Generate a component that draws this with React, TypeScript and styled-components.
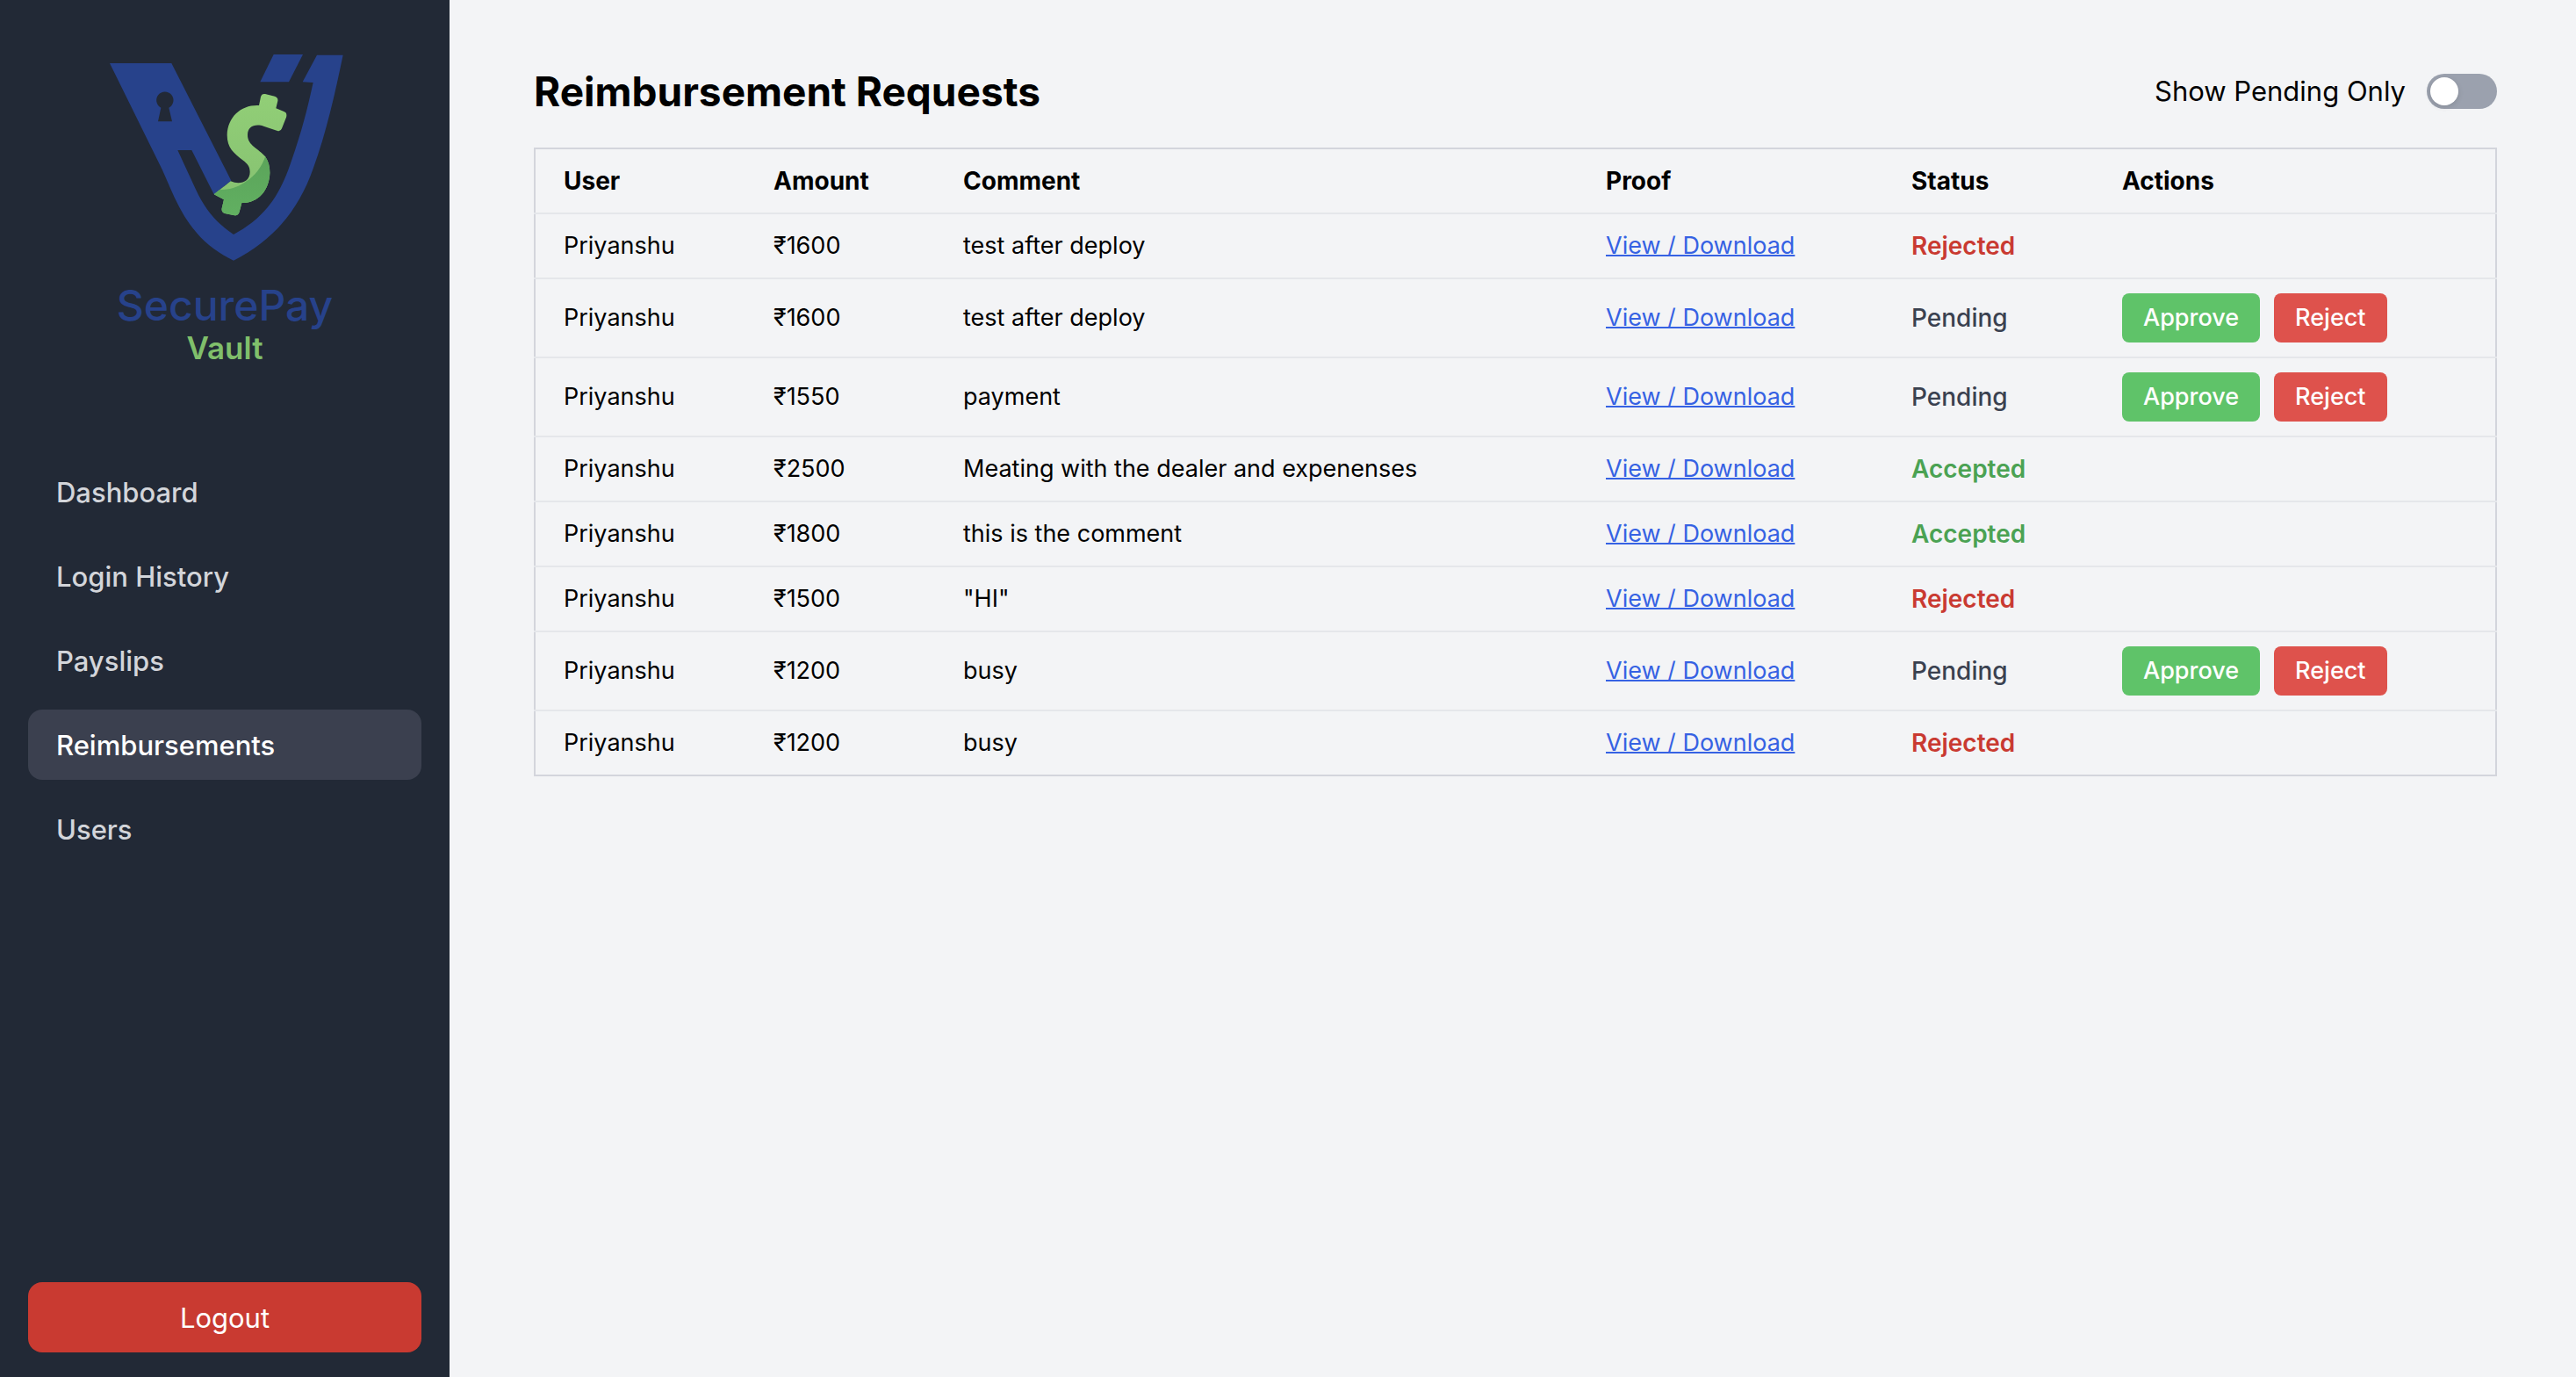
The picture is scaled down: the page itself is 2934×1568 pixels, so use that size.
import React, { useState } from "react";
import styled, { createGlobalStyle } from "styled-components";

const colors = {
  sidebar: "#222936",
  navActive: "#3b404f",
  navText: "#d3d5da",
  page: "#f3f4f6",
  border: "#d3d5dc",
  line: "#e5e7ea",
  link: "#3662e3",
  approve: "#5fc369",
  reject: "#de524c",
  danger: "#c93a31",
  success: "#4ba253",
  muted: "#3a4150",
  brandBlue: "#27428b",
  brandGreen: "#80bf6b",
};

const GlobalStyle = createGlobalStyle`
  *, *::before, *::after { box-sizing: border-box; }
  body {
    margin: 0;
    background: ${colors.page};
    color: #000;
    font-family: Inter, "Liberation Sans", sans-serif;
    font-size: 31px;
    line-height: 48px;
  }
`;

const Layout = styled.div`
  display: flex;
  min-height: 100vh;
`;

const Sidebar = styled.aside`
  flex: 0 0 512px;
  display: flex;
  flex-direction: column;
  padding: 40px 32px 28px;
  background: ${colors.sidebar};
`;

const Brand = styled.div`
  display: flex;
  flex-direction: column;
  align-items: center;
  margin-bottom: 104px;
`;

const BrandMark = styled.svg`
  width: 310px;
  height: 260px;
`;

const BrandName = styled.span`
  margin: 24px 0 4px;
  font-size: 48px;
  font-weight: 500;
  line-height: 48px;
  color: ${colors.brandBlue};
`;

const BrandSub = styled.span`
  font-size: 35px;
  font-weight: 600;
  line-height: 40px;
  color: ${colors.brandGreen};
`;

const Nav = styled.nav`
  display: flex;
  flex-direction: column;
  gap: 16px;
`;

const NavLink = styled.a<{ $active?: boolean }>`
  padding: 17px 32px 15px;
  border-radius: 16px;
  font-weight: 500;
  text-decoration: none;
  color: ${(p) => (p.$active ? "#fff" : colors.navText)};
  background: ${(p) => (p.$active ? colors.navActive : "transparent")};
`;

const LogoutButton = styled.button`
  margin-top: auto;
  padding: 17px 32px 15px;
  border: 0;
  border-radius: 16px;
  background: ${colors.danger};
  color: #fff;
  font: inherit;
  cursor: pointer;
`;

const Main = styled.main`
  flex: 1;
  min-width: 0;
  padding: 72px 90px 72px 96px;
`;

const Header = styled.header`
  display: flex;
  align-items: center;
  justify-content: space-between;
  margin-bottom: 32px;
`;

const Title = styled.h1`
  margin: 0;
  font-size: 46px;
  font-weight: 700;
  line-height: 64px;
`;

const ToggleLabel = styled.label`
  display: flex;
  align-items: center;
  gap: 24px;
  cursor: pointer;
`;

const Toggle = styled.input`
  appearance: none;
  display: flex;
  width: 80px;
  height: 40px;
  margin: 0;
  padding: 4px;
  border-radius: 20px;
  background: #9ba1ae;
  cursor: pointer;

  &::before {
    content: "";
    width: 32px;
    height: 32px;
    border-radius: 50%;
    background: #fff;
    box-shadow: 0 2px 6px rgba(0, 0, 0, 0.12);
  }

  &:checked {
    justify-content: flex-end;
    background: ${colors.approve};
  }
`;

const Table = styled.table`
  width: 100%;
  table-layout: fixed;
  border-collapse: collapse;
  border: 2px solid ${colors.border};
  font-size: 27px;
  line-height: 40px;
`;

const Col = styled.col<{ $width?: number }>`
  width: ${(p) => (p.$width ? `${p.$width}px` : "auto")};
`;

const Row = styled.tr`
  border-bottom: 2px solid ${colors.line};

  tbody > &:last-child {
    border-bottom-color: ${colors.border};
  }
`;

const HeadCell = styled.th`
  padding: 16px 32px;
  font-size: 28px;
  font-weight: 700;
  text-align: left;
`;

const Cell = styled.td`
  padding: 16px 32px;
`;

const ProofLink = styled.a`
  color: ${colors.link};
  text-decoration: underline;
  text-decoration-thickness: 2px;
`;

type StatusValue = "Rejected" | "Pending" | "Accepted";

const statusColor: Record<StatusValue, string> = {
  Rejected: colors.danger,
  Pending: colors.muted,
  Accepted: colors.success,
};

const StatusCell = styled(Cell)<{ $value: StatusValue }>`
  color: ${(p) => statusColor[p.$value]};
  font-size: 28px;
  font-weight: ${(p) => (p.$value === "Pending" ? 500 : 600)};
`;

const Actions = styled.div`
  display: flex;
  gap: 16px;
`;

const ActionButton = styled.button<{ $kind: "approve" | "reject" }>`
  padding: 8px 24px;
  border: 0;
  border-radius: 8px;
  background: ${(p) => colors[p.$kind]};
  color: #fff;
  font: inherit;
  font-weight: 500;
  cursor: pointer;
`;

interface Request {
  id: number;
  user: string;
  amount: number;
  comment: string;
  status: StatusValue;
}

const initialRequests: Request[] = [
  { id: 1, user: "Priyanshu", amount: 1600, comment: "test after deploy", status: "Rejected" },
  { id: 2, user: "Priyanshu", amount: 1600, comment: "test after deploy", status: "Pending" },
  { id: 3, user: "Priyanshu", amount: 1550, comment: "payment", status: "Pending" },
  { id: 4, user: "Priyanshu", amount: 2500, comment: "Meating with the dealer and expenenses", status: "Accepted" },
  { id: 5, user: "Priyanshu", amount: 1800, comment: "this is the comment", status: "Accepted" },
  { id: 6, user: "Priyanshu", amount: 1500, comment: '"HI"', status: "Rejected" },
  { id: 7, user: "Priyanshu", amount: 1200, comment: "busy", status: "Pending" },
  { id: 8, user: "Priyanshu", amount: 1200, comment: "busy", status: "Rejected" },
];

const navItems = ["Dashboard", "Login History", "Payslips", "Reimbursements", "Users"];
const columns = ["User", "Amount", "Comment", "Proof", "Status", "Actions"];
const columnWidths = [240, 216, undefined, 348, 240, 458];

function Logo() {
  return (
    <BrandMark viewBox="0 0 930 780" aria-hidden="true">
      <defs>
        <linearGradient id="dollarLight" x1="0" y1="0" x2="0" y2="1">
          <stop offset="0" stopColor="#92cf77" />
          <stop offset="1" stopColor="#84bf70" />
        </linearGradient>
        <linearGradient id="dollarDark" x1="0" y1="0" x2="0" y2="1">
          <stop offset="0" stopColor="#5ba45a" />
          <stop offset="1" stopColor="#62b162" />
        </linearGradient>
        <clipPath id="dollarShape">
          <path d="M582 240 L588 211 Q591 199 603 201 L636 209 Q648 213 646 225 L640 250 L669 262 Q679 267 676 278 L660 319 Q656 330 645 327 L600 312 C570 301 543 311 543 341 C543 377 580 387 603 414 C614 430 619 448 619 470 C617 532 578 574 523 573 L515 604 Q511 618 498 616 L465 609 Q453 605 455 592 L462 562 L428 544 L485 499 C515 512 551 503 551 467 C551 447 542 439 528 428 C496 403 473 385 473 341 C475 278 522 237 582 240 Z" />
        </clipPath>
      </defs>
      <path
        fill={colors.brandBlue}
        fillRule="evenodd"
        d="M72 96 L283 96 L487 497 L428 544 L352 393 L304 393 L365 525 C400 601 437 641 495 681 C611 618 656 540 694 426 C726 335 748 251 767 162 L731 160 L780 68 L869 68 C842 198 812 333 767 456 C719 592 637 698 495 770 C407 728 353 669 310 588 C286 544 271 502 251 459 Z M247 248 L237 295 L285 295 L274 248 A29 29 0 1 0 247 248 Z"
      />
      <path fill={colors.brandBlue} d="M632 66 L732 66 L684 160 L586 160 Z" />
      <g clipPath="url(#dollarShape)">
        <rect x="420" y="190" width="270" height="440" fill="url(#dollarLight)" />
        <path
          fill="url(#dollarDark)"
          d="M605 410 C592 451 565 483 540 498 C510 521 475 532 420 528 L420 640 L640 640 L640 410 Z"
        />
      </g>
    </BrandMark>
  );
}

export default function App() {
  const [requests, setRequests] = useState(initialRequests);
  const [pendingOnly, setPendingOnly] = useState(false);

  const resolve = (id: number, status: StatusValue) =>
    setRequests((all) => all.map((r) => (r.id === id ? { ...r, status } : r)));

  const visible = pendingOnly ? requests.filter((r) => r.status === "Pending") : requests;

  return (
    <>
      <GlobalStyle />
      <Layout>
        <Sidebar>
          <Brand>
            <Logo />
            <BrandName>SecurePay</BrandName>
            <BrandSub>Vault</BrandSub>
          </Brand>
          <Nav>
            {navItems.map((item) => (
              <NavLink key={item} href="#" $active={item === "Reimbursements"}>
                {item}
              </NavLink>
            ))}
          </Nav>
          <LogoutButton type="button">Logout</LogoutButton>
        </Sidebar>
        <Main>
          <Header>
            <Title>Reimbursement Requests</Title>
            <ToggleLabel htmlFor="pending-only">
              Show Pending Only
              <Toggle
                id="pending-only"
                type="checkbox"
                checked={pendingOnly}
                onChange={(e) => setPendingOnly(e.target.checked)}
              />
            </ToggleLabel>
          </Header>
          <Table>
            <colgroup>
              {columnWidths.map((width, i) => (
                <Col key={columns[i]} $width={width} />
              ))}
            </colgroup>
            <thead>
              <Row>
                {columns.map((name) => (
                  <HeadCell key={name} scope="col">
                    {name}
                  </HeadCell>
                ))}
              </Row>
            </thead>
            <tbody>
              {visible.map((r) => (
                <Row key={r.id}>
                  <Cell>{r.user}</Cell>
                  <Cell>₹{r.amount}</Cell>
                  <Cell>{r.comment}</Cell>
                  <Cell>
                    <ProofLink href="#">View / Download</ProofLink>
                  </Cell>
                  <StatusCell $value={r.status}>{r.status}</StatusCell>
                  <Cell>
                    {r.status === "Pending" && (
                      <Actions>
                        <ActionButton type="button" $kind="approve" onClick={() => resolve(r.id, "Accepted")}>
                          Approve
                        </ActionButton>
                        <ActionButton type="button" $kind="reject" onClick={() => resolve(r.id, "Rejected")}>
                          Reject
                        </ActionButton>
                      </Actions>
                    )}
                  </Cell>
                </Row>
              ))}
            </tbody>
          </Table>
        </Main>
      </Layout>
    </>
  );
}
